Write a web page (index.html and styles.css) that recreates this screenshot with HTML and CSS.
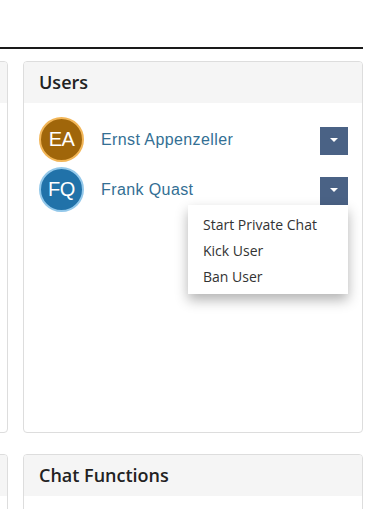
FILE: index.html
```html
<!DOCTYPE html>
<html>
<head>
<meta charset="utf-8">
<link rel="stylesheet" href="styles.css">
</head>
<body>
<div class="page">
  <div class="topbar"></div>
  <div class="grid">
    <div class="panel panel-side">
      <div class="panel-heading"></div>
    </div>
    <div class="panel panel-users">
      <div class="panel-heading">Users</div>
      <div class="panel-body">
        <div class="user-row">
          <div class="avatar avatar-ea">EA</div>
          <div class="user-name">Ernst Appenzeller</div>
          <div class="dd">
            <button class="dd-btn"><span class="caret"></span></button>
          </div>
        </div>
        <div class="user-row">
          <div class="avatar avatar-fq">FQ</div>
          <div class="user-name">Frank Quast</div>
          <div class="dd">
            <button class="dd-btn"><span class="caret"></span></button>
            <ul class="dd-menu">
              <li>Start Private Chat</li>
              <li>Kick User</li>
              <li>Ban User</li>
            </ul>
          </div>
        </div>
      </div>
    </div>
    <div class="panel panel-side2">
      <div class="panel-heading"></div>
    </div>
    <div class="panel panel-chat">
      <div class="panel-heading">Chat Functions</div>
    </div>
  </div>
</div>
</body>
</html>
```
FILE: styles.css
```css
html, body {
  margin: 0;
  padding: 0;
  background: #fff;
  overflow: hidden;
}
.page {
  width: 378px;
  height: 509px;
  overflow: hidden;
  font-family: "Open Sans", "Liberation Sans", sans-serif;
  color: #333;
}
.topbar {
  margin-left: -300px;
  width: 663px;
  height: 47px;
  border-bottom: 2px solid #1a1a1a;
}
.grid {
  margin-left: -300px;
  margin-top: 12px;
  display: grid;
  grid-template-columns: 308px 340px;
  column-gap: 15px;
  row-gap: 21px;
}
.panel {
  box-sizing: border-box;
  border: 1px solid #dddddd;
  border-radius: 4px;
  background: #fff;
}
.panel-users, .panel-side {
  height: 372px;
}
.panel-chat, .panel-side2 {
  height: 200px;
}
.panel-heading {
  background: #f5f5f5;
  height: 41px;
  box-sizing: border-box;
  padding: 9px 15px 10px;
  font-size: 18px;
  line-height: 22px;
  font-weight: 600;
  color: #222;
  border-radius: 3px 3px 0 0;
}
.panel-body {
  padding: 14px 14px 15px 15px;
  display: flex;
  flex-direction: column;
  gap: 5px;
}
.user-row {
  display: flex;
  align-items: center;
  height: 45px;
}
.avatar {
  box-sizing: border-box;
  width: 45px;
  height: 45px;
  border-radius: 50%;
  border: 2px solid;
  color: #fff;
  font-family: "Liberation Sans", Arial, sans-serif;
  font-size: 20px;
  display: flex;
  align-items: center;
  justify-content: center;
  letter-spacing: -0.5px;
}
.avatar-ea {
  background: #a0660a;
  border-color: #f2b658;
}
.avatar-fq {
  background: #2172a9;
  border-color: #93c8ea;
}
.user-name {
  flex: 1;
  margin-left: 17px;
  font-family: "Liberation Sans", Arial, sans-serif;
  font-size: 16px;
  line-height: 18px;
  letter-spacing: 0.4px;
  color: #336f94;
  padding-top: 1px;
}
.dd {
  position: relative;
  margin-top: 2px;
}
.dd-btn {
  display: flex;
  align-items: center;
  justify-content: center;
  width: 28px;
  height: 28px;
  padding: 0;
  border: 0;
  background: #4a6285;
}
.caret {
  width: 0;
  height: 0;
  border-left: 4px solid transparent;
  border-right: 4px solid transparent;
  border-top: 4px solid #fff;
  margin-top: -1px;
}
.dd-menu {
  position: absolute;
  right: 0;
  top: 100%;
  width: 160px;
  margin: 0;
  padding: 7px 0 4px;
  list-style: none;
  background: #fff;
  box-shadow: 0 6px 12px rgba(0, 0, 0, 0.3);
  z-index: 5;
}
.dd-menu li {
  padding: 0 15px;
  font-size: 14px;
  line-height: 26px;
  color: #333;
  white-space: nowrap;
}
```
